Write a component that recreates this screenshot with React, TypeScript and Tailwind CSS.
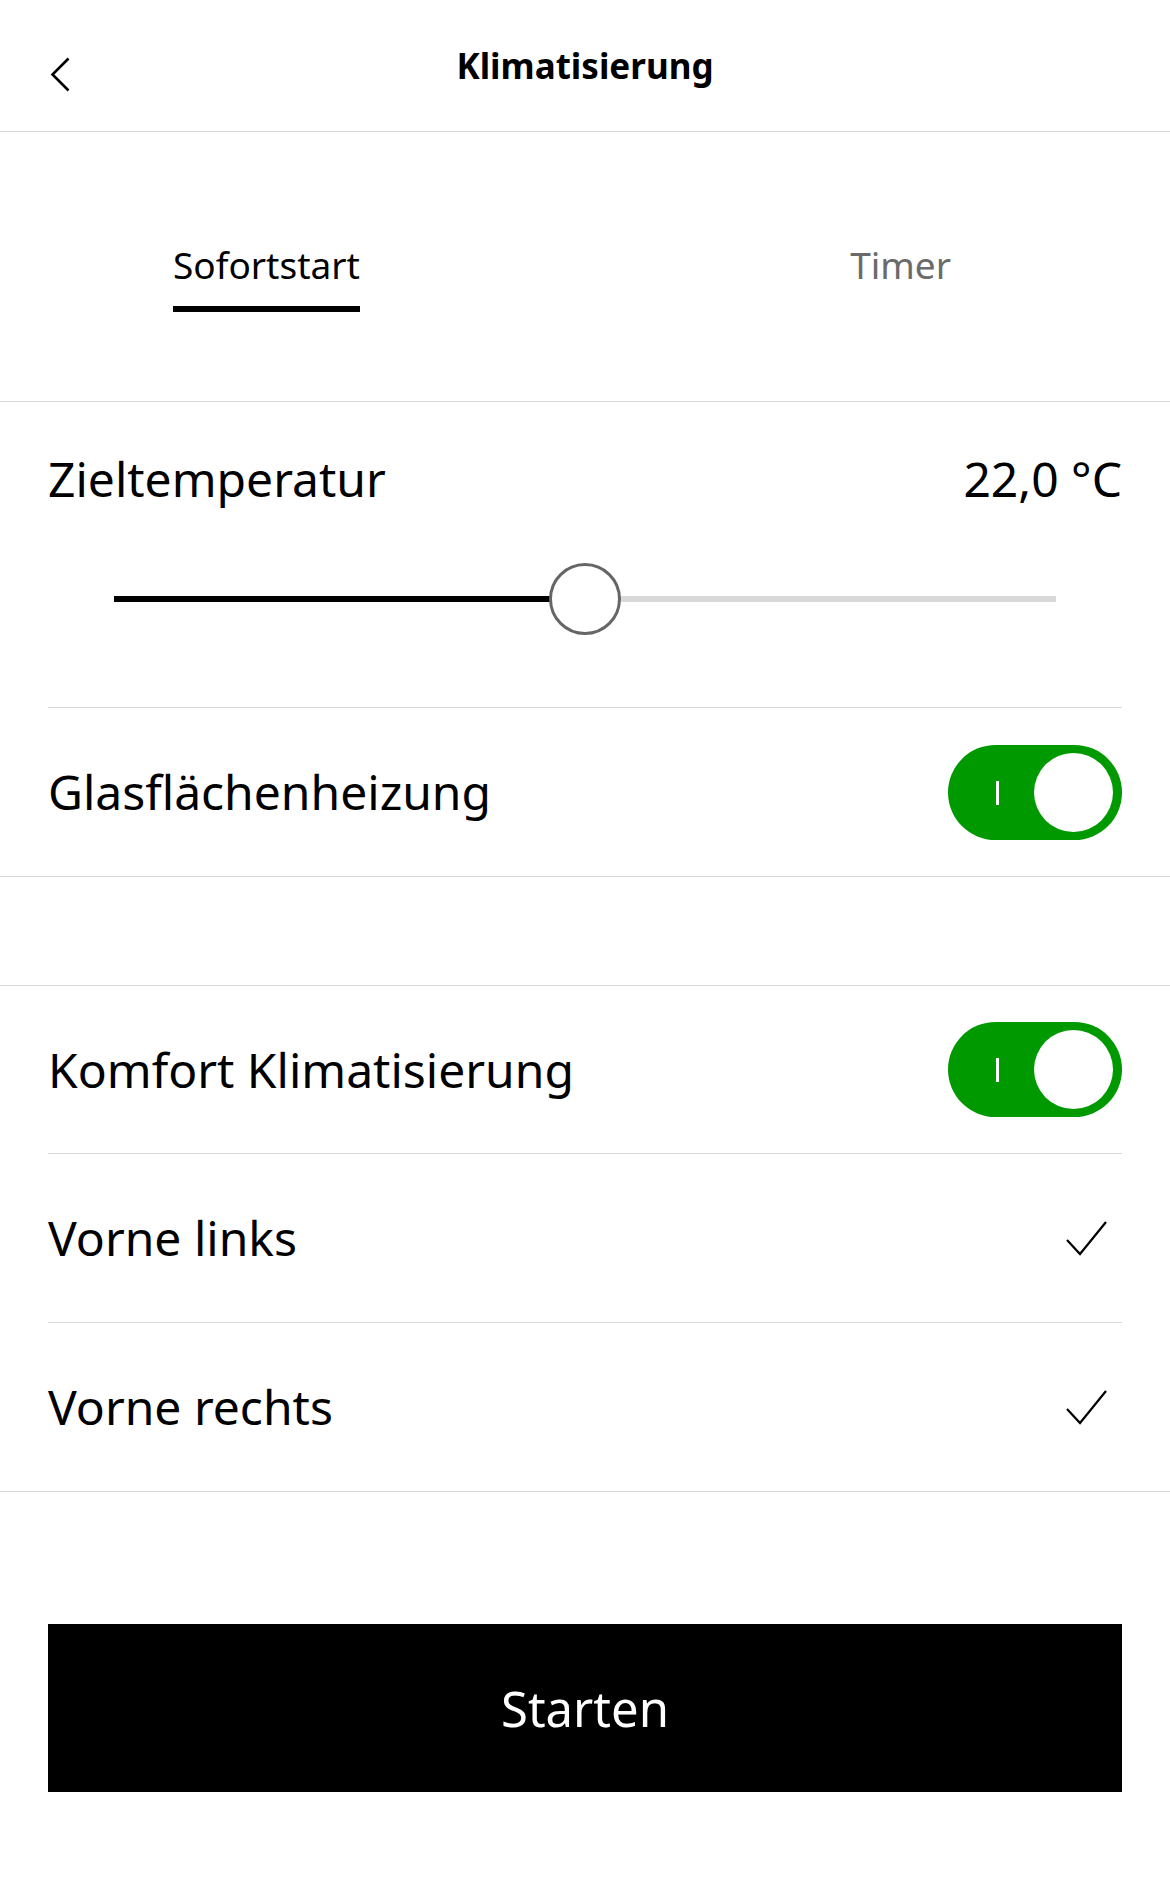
import { useState } from "react";

function Toggle({ on }: { on: boolean }) {
  return (
    <div
      className={`relative flex h-[95px] w-[174px] shrink-0 items-center rounded-full ${
        on ? "bg-[#009a00]" : "bg-[#c8c8c8]"
      }`}
    >
      <span className="absolute left-[48px] top-[36px] h-[24px] w-[3px] bg-white" />
      <span className="absolute right-[9px] top-[8px] h-[79px] w-[79px] rounded-full bg-white" />
    </div>
  );
}

function Check() {
  return (
    <svg width="42" height="35" viewBox="0 0 42 35" fill="none" className="mr-[14px]">
      <path d="M1 19 L14 33 L40 1" stroke="#000" strokeWidth={2.2} strokeLinejoin="miter" />
    </svg>
  );
}

export default function App() {
  const [tab, setTab] = useState<"now" | "timer">("now");
  const temp = 50;

  return (
    <div
      className="min-h-[1890px] w-[1170px] bg-white text-black"
      style={{ fontFamily: '"Noto Sans", "Open Sans", sans-serif' }}
    >
      {/* header */}
      <header className="grid h-[132px] grid-cols-[1fr_auto_1fr] items-center border-b border-[#d9d9d9] px-[50px]">
        <button className="mt-[18px] justify-self-start" aria-label="Zurück">
          <svg width="20" height="35" viewBox="0 0 20 35" fill="none">
            <path d="M18.5 1.5 L2.5 17.5 L18.5 33.5" stroke="#000" strokeWidth={2.6} />
          </svg>
        </button>
        <h1 className="text-[35px] font-bold leading-none">Klimatisierung</h1>
        <div />
      </header>

      {/* tabs */}
      <div className="flex justify-between border-b border-[#d9d9d9] pb-[89px] pl-[173px] pr-[219px] pt-[114px]">
        <button onClick={() => setTab("now")} className="flex flex-col items-stretch">
          <span className={`text-[37px] leading-none ${tab === "now" ? "text-black" : "text-[#6b6b6b]"}`}>
            Sofortstart
          </span>
          <span className={`mt-[23px] h-[6px] ${tab === "now" ? "bg-black" : "bg-transparent"}`} />
        </button>
        <button onClick={() => setTab("timer")} className="flex flex-col items-stretch">
          <span className={`text-[37px] leading-none ${tab === "timer" ? "text-black" : "text-[#6b6b6b]"}`}>
            Timer
          </span>
          <span className={`mt-[23px] h-[6px] ${tab === "timer" ? "bg-black" : "bg-transparent"}`} />
        </button>
      </div>

      {/* temperature + glass heating */}
      <section className="border-b border-[#d9d9d9] px-[48px]">
        <div className="border-b border-[#d9d9d9] pb-[72px] pt-[53px]">
          <div className="flex items-center justify-between text-[48px] leading-none">
            <span>Zieltemperatur</span>
            <span>22,0 °C</span>
          </div>
          <div className="mx-[66px] mt-[60px] flex h-[72px] items-center">
            <div className="relative h-[6px] w-full bg-[#d9d9d9]">
              <div className="absolute inset-y-0 left-0 bg-black" style={{ width: `${temp}%` }} />
              <div
                className="absolute top-1/2 h-[72px] w-[72px] -translate-x-1/2 -translate-y-1/2 rounded-full border-[3px] border-[#666] bg-white"
                style={{ left: `${temp}%` }}
              />
            </div>
          </div>
        </div>
        <div className="flex h-[168px] items-center justify-between">
          <span className="text-[48px] leading-none">Glasflächenheizung</span>
          <Toggle on />
        </div>
      </section>

      <div className="h-[109px] border-b border-[#d9d9d9]" />

      {/* comfort */}
      <section className="border-b border-[#d9d9d9] px-[48px]">
        <div className="flex h-[168px] items-center justify-between border-b border-[#d9d9d9]">
          <span className="text-[48px] leading-none">Komfort Klimatisierung</span>
          <Toggle on />
        </div>
        <div className="flex h-[169px] items-center justify-between border-b border-[#d9d9d9]">
          <span className="text-[48px] leading-none">Vorne links</span>
          <Check />
        </div>
        <div className="flex h-[168px] items-center justify-between">
          <span className="text-[48px] leading-none">Vorne rechts</span>
          <Check />
        </div>
      </section>

      <div className="px-[48px] pb-[98px] pt-[132px]">
        <button className="flex h-[168px] w-full items-center justify-center bg-black text-[49px] leading-none text-white">
          Starten
        </button>
      </div>
    </div>
  );
}
